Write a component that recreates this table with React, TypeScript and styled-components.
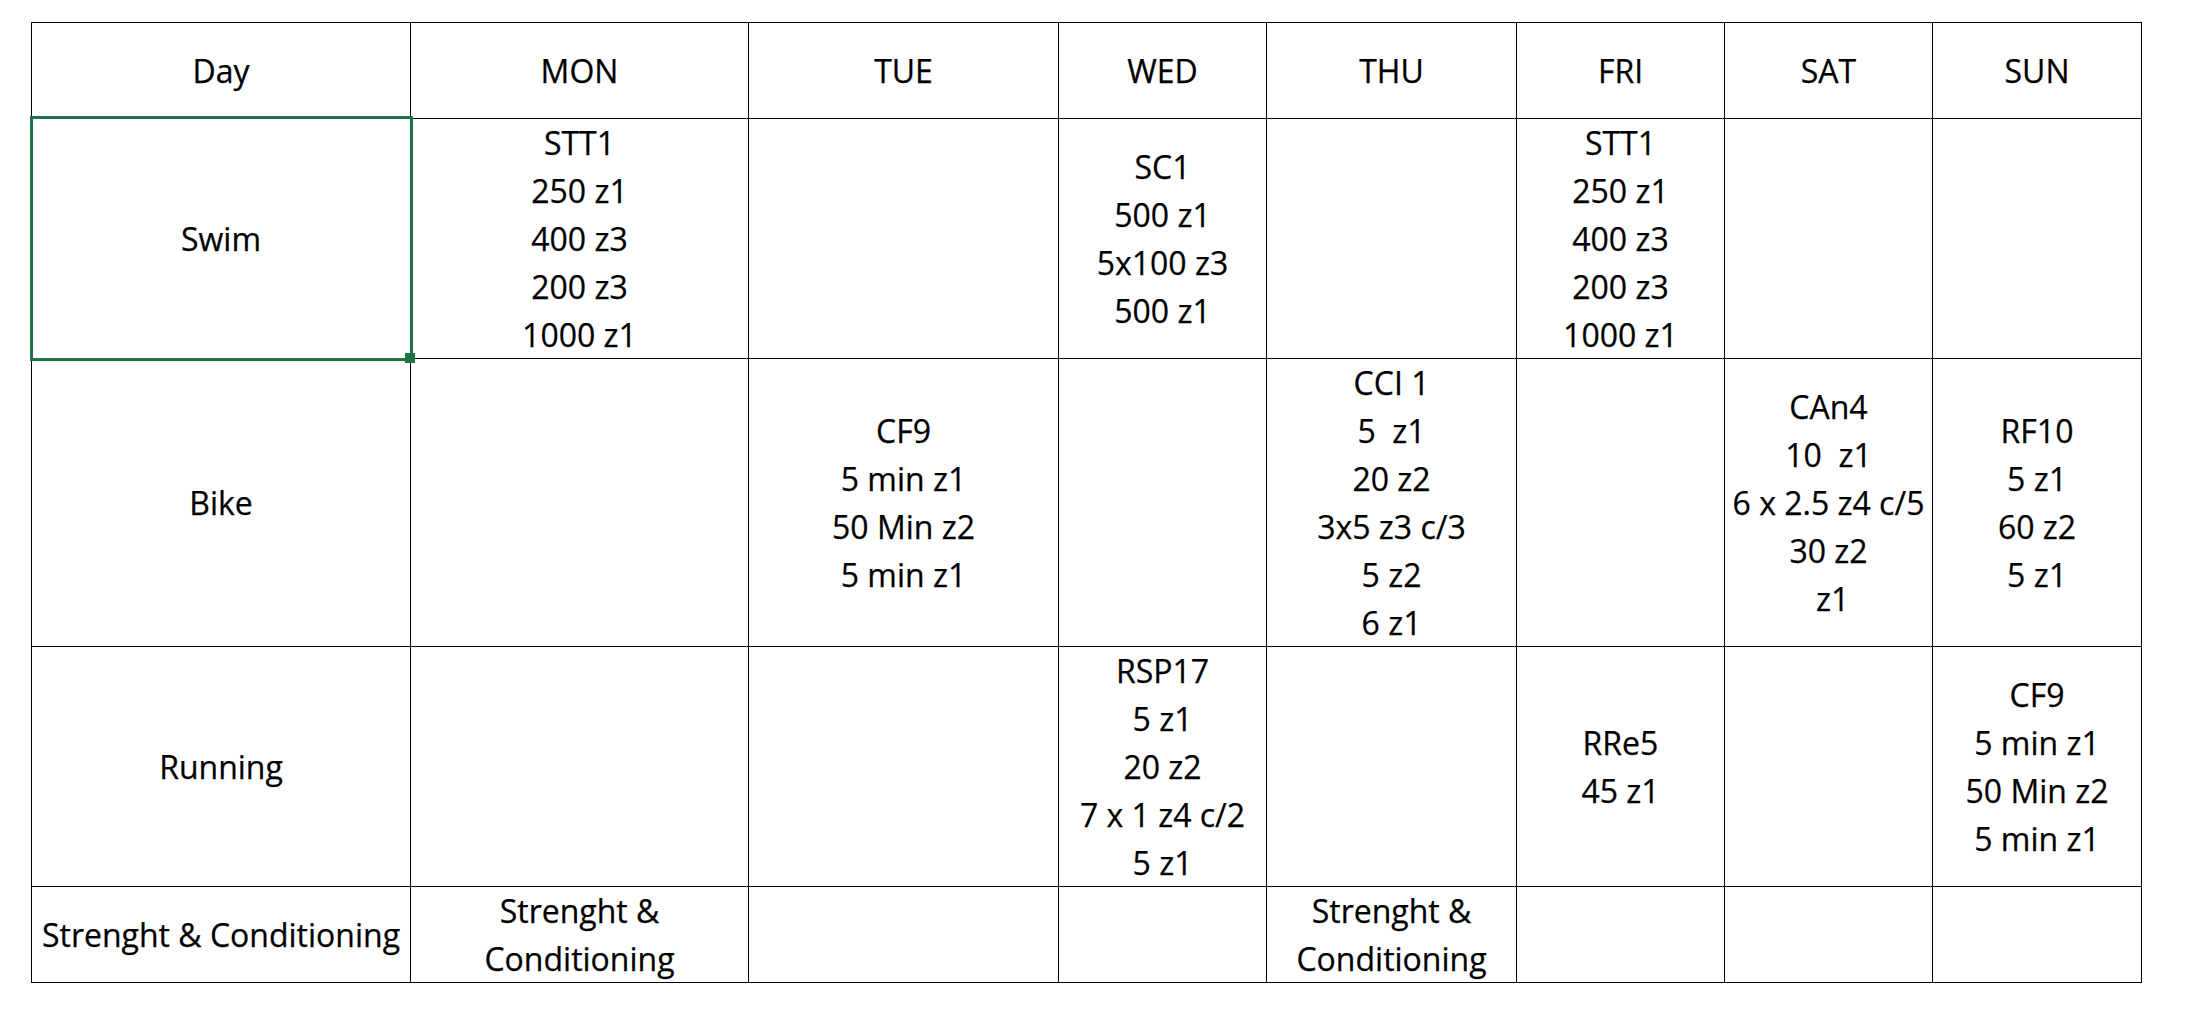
import React from 'react';
import styled, { createGlobalStyle } from 'styled-components';

const GlobalStyle = createGlobalStyle`
    html, body {
        margin: 0;
        background: #ffffff;
    }
    body {
        padding: 22px 0 0 31px;
        font-family: "Open Sans", "Liberation Sans", sans-serif;
        color: #000000;
    }
`;

const columnWidths = [379, 338, 310, 208, 250, 208, 208, 209];
const rowHeights = [96, 240, 288, 240, 96];

const Sheet = styled.div`
    display: grid;
    grid-template-columns: ${columnWidths.map(w => `${w}px`).join(' ')};
    grid-template-rows: ${rowHeights.map(h => `${h}px`).join(' ')};
    width: max-content;
    border-left: 1px solid #000;
    border-top: 1px solid #000;
    box-sizing: border-box;
`;

const Cell = styled.div<{ $selected?: boolean }>`
    position: relative;
    display: flex;
    align-items: center;
    justify-content: center;
    box-sizing: border-box;
    border-right: 1px solid #000;
    border-bottom: 1px solid #000;
    font-size: 32px;
    line-height: 48px;
    text-align: center;
    white-space: pre;
    -webkit-text-stroke: 0.25px #000;

    ${props => props.$selected && `
        z-index: 1;
        &::after {
            content: '';
            position: absolute;
            top: -3px;
            left: -2px;
            right: -3px;
            bottom: -3px;
            border: 3px solid #217346;
            pointer-events: none;
        }
    `}
`;

const FillHandle = styled.span`
    position: absolute;
    right: -5px;
    bottom: -5px;
    width: 10px;
    height: 10px;
    background: #217346;
    z-index: 2;
`;

const header = ['Day', 'MON', 'TUE', 'WED', 'THU', 'FRI', 'SAT', 'SUN'];

const rows: { label: string; days: string[] }[] = [
    {
        label: 'Swim',
        days: [
            'STT1\n250 z1\n400 z3\n200 z3\n1000 z1',
            '',
            'SC1\n500 z1\n5x100 z3\n500 z1',
            '',
            'STT1\n250 z1\n400 z3\n200 z3\n1000 z1',
            '',
            '',
        ],
    },
    {
        label: 'Bike',
        days: [
            '',
            'CF9\n5 min z1\n50 Min z2\n5 min z1',
            '',
            'CCI 1\n5  z1\n20 z2\n3x5 z3 c/3\n5 z2\n6 z1',
            '',
            'CAn4\n10  z1\n6 x 2.5 z4 c/5\n30 z2\n z1',
            'RF10\n5 z1\n60 z2\n5 z1',
        ],
    },
    {
        label: 'Running',
        days: [
            '',
            '',
            'RSP17\n5 z1\n20 z2\n7 x 1 z4 c/2\n5 z1',
            '',
            'RRe5\n45 z1',
            '',
            'CF9\n5 min z1\n50 Min z2\n5 min z1',
        ],
    },
    {
        label: 'Strenght & Conditioning',
        days: [
            'Strenght &\nConditioning',
            '',
            '',
            'Strenght &\nConditioning',
            '',
            '',
            '',
        ],
    },
];

const App: React.FC = () => {
    return (
        <>
            <GlobalStyle />
            <Sheet>
                {header.map(day => (
                    <Cell key={day}>{day}</Cell>
                ))}
                {rows.map(row => (
                    <React.Fragment key={row.label}>
                        <Cell $selected={row.label === 'Swim'}>
                            {row.label}
                            {row.label === 'Swim' && <FillHandle />}
                        </Cell>
                        {row.days.map((text, i) => (
                            <Cell key={`${row.label}-${i}`}>{text}</Cell>
                        ))}
                    </React.Fragment>
                ))}
            </Sheet>
        </>
    );
};

export default App;
